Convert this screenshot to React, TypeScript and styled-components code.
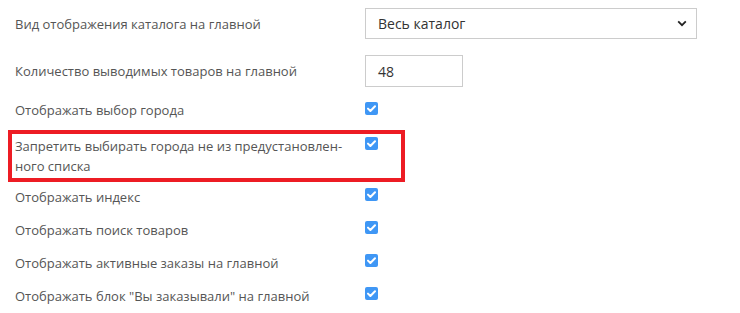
import React from "react";
import styled, { createGlobalStyle } from "styled-components";

const Global = createGlobalStyle`
  html, body { margin: 0; padding: 0; background: #fff; }
  body { font-family: "Open Sans", "DejaVu Sans", sans-serif; font-size: 13px; color: #555; }
`;

const Form = styled.div`
  display: flex;
  flex-direction: column;
  padding: 8px 0 0 8px;
  width: 720px;
`;

const Row = styled.div<{ $h: number; $mt?: number }>`
  display: grid;
  grid-template-columns: 350px 1fr;
  align-items: start;
  min-height: ${(p) => p.$h}px;
  margin-top: ${(p) => p.$mt ?? 0}px;
  padding-left: 7px;
`;

const Label = styled.div<{ $pt: number }>`
  padding-top: ${(p) => p.$pt}px;
  line-height: 20px;
  color: #555;
`;

const Highlight = styled.div`
  border: 4px solid #ed1c24;
  width: 386px;
  box-sizing: content-box;
  margin-top: 1px;
  height: 44px;
  display: grid;
  grid-template-columns: 350px 1fr;
  padding-left: 3px;
`;

const SelectBox = styled.div`
  width: 332px;
  height: 31px;
  box-sizing: border-box;
  border: 1px solid #ccc;
  display: flex;
  align-items: center;
  justify-content: space-between;
  padding: 0 9px 0 12px;
  color: #333;
  font-size: 14px;
`;

const InputBox = styled.div`
  width: 98px;
  height: 32px;
  box-sizing: border-box;
  border: 1px solid #ccc;
  display: flex;
  align-items: center;
  padding-left: 12px;
  color: #333;
  font-size: 14px;
`;

const Check = styled.div<{ $mt: number }>`
  width: 13px;
  height: 13px;
  border-radius: 2px;
  background: #3f97f5;
  margin-top: ${(p) => p.$mt}px;
  display: flex;
  align-items: center;
  justify-content: center;
`;

const CheckMark = () => (
  <svg width="9" height="7" viewBox="0 0 9 7">
    <path d="M1 3.6 L3.4 6 L8 1.2" fill="none" stroke="#fff" strokeWidth="2" strokeLinecap="round" strokeLinejoin="round" />
  </svg>
);

const Chevron = () => (
  <svg width="10" height="7" viewBox="0 0 10 7">
    <path d="M1.2 1.4 L5 5.2 L8.8 1.4" fill="none" stroke="#222" strokeWidth="1.8" />
  </svg>
);

const checkRows = [
  "Отображать индекс",
  "Отображать поиск товаров",
  "Отображать активные заказы на главной",
  'Отображать блок "Вы заказывали" на главной',
];

export default function App() {
  return (
    <>
      <Global />
      <Form>
        <Row $h={47}>
          <Label $pt={6}>Вид отображения каталога на главной</Label>
          <SelectBox>
            <span>Весь каталог</span>
            <Chevron />
          </SelectBox>
        </Row>
        <Row $h={40}>
          <Label $pt={6}>Количество выводимых товаров на главной</Label>
          <InputBox>48</InputBox>
        </Row>
        <Row $h={34}>
          <Label $pt={5}>Отображать выбор города</Label>
          <Check $mt={7}>
            <CheckMark />
          </Check>
        </Row>
        <Highlight>
          <Label $pt={2}>
            Запретить выбирать города не из предустановлен-
            <br />
            ного списка
          </Label>
          <Check $mt={3}>
            <CheckMark />
          </Check>
        </Highlight>
        {checkRows.map((t) => (
          <Row $h={33} key={t}>
            <Label $pt={5}>{t}</Label>
            <Check $mt={6}>
              <CheckMark />
            </Check>
          </Row>
        ))}
      </Form>
    </>
  );
}
